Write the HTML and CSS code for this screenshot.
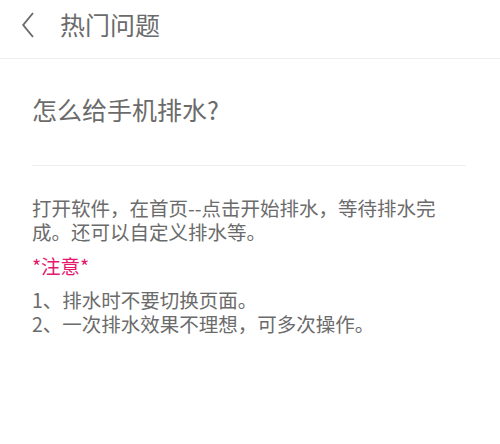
FILE: index.html
```html
<!DOCTYPE html>
<html lang="zh-CN">
<head>
<meta charset="utf-8">
<link rel="stylesheet" href="styles.css">
</head>
<body>
<header class="topbar">
  <svg class="back" width="12" height="26" viewBox="0 0 12 26"><polyline points="11,1 1.2,13 11,25" fill="none" stroke="#6a6a6a" stroke-width="1.9"/></svg>
  <h1 class="title">热门问题</h1>
</header>
<main class="content">
  <h2 class="question">怎么给手机排水?</h2>
  <p class="answer">打开软件，在首页--点击开始排水，等待排水完成。还可以自定义排水等。</p>
  <p class="note">*注意*</p>
  <ol class="tips">
    <li>1、排水时不要切换页面。</li>
    <li>2、一次排水效果不理想，可多次操作。</li>
  </ol>
</main>
</body>
</html>
```
FILE: styles.css
```css
html, body {
  margin: 0;
  padding: 0;
  background: #fff;
}
body {
  font-family: "Noto Sans CJK SC", "Noto Sans", sans-serif;
  color: #6b6b6b;
}
.topbar {
  height: 46px;
  padding: 12px 0 0 22px;
  border-bottom: 1px solid #eeeeee;
  display: flex;
  align-items: flex-start;
}
.back {
  display: block;
}
.title {
  margin: -2px 0 0 26px;
  font-size: 25px;
  font-weight: normal;
  line-height: 28px;
  color: #6b6b6b;
}
.content {
  padding: 0 34px 0 32px;
}
.question {
  margin: 0;
  padding: 33px 0 39px;
  font-size: 25px;
  font-weight: normal;
  line-height: 34px;
  border-bottom: 1px solid #eeeeee;
}
.answer {
  margin: 30px 0 0;
  font-size: 19.5px;
  line-height: 24px;
  max-width: 415px;
}
.note {
  margin: 10px 0 0;
  font-size: 19.5px;
  line-height: 24px;
  color: #e4186c;
}
.tips {
  list-style: none;
  margin: 10px 0 0;
  padding: 0;
  font-size: 19.5px;
  line-height: 24px;
}
```
